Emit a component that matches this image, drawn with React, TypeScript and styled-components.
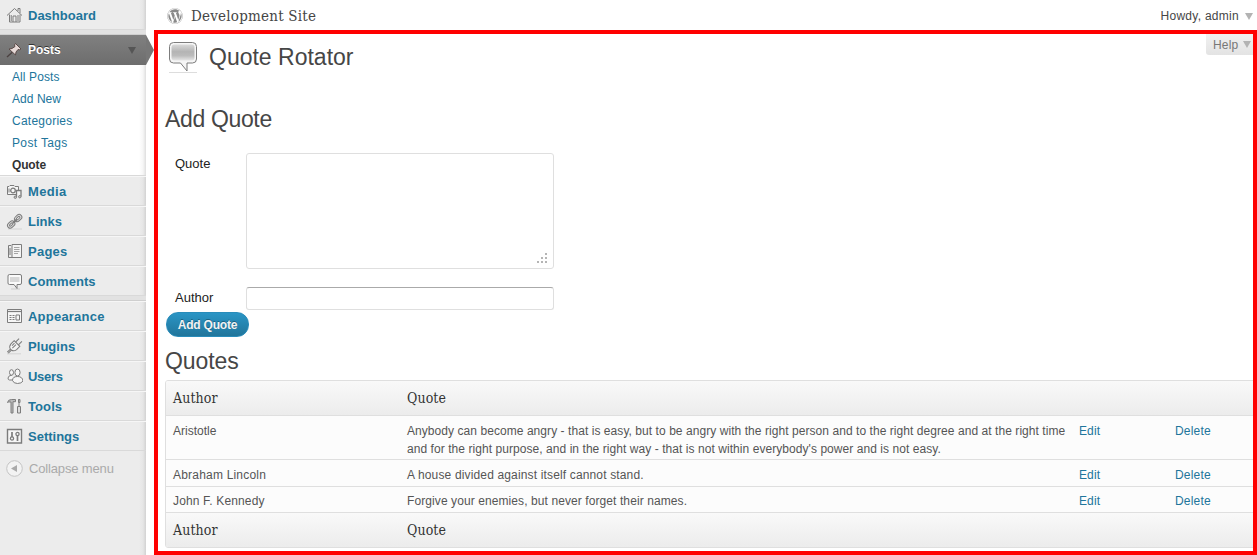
import React from "react";
import styled, { createGlobalStyle, css } from "styled-components";
import { FaWordpress } from "react-icons/fa";

const sans = `"Liberation Sans", Arial, sans-serif`;
const serif = `"DejaVu Serif Condensed", "DejaVu Serif", serif`;

const Global = createGlobalStyle`
  * { box-sizing: border-box; }
  body { margin: 0; background: #fff; font: 12px/18px ${sans}; color: #555; overflow: hidden; }
`;

const Page = styled.div`display: flex; width: 1257px; height: 555px; overflow: hidden;`;

const Sidebar = styled.nav`
  width: 146px;
  flex: none;
  background: linear-gradient(to right, #ececec 139px, #e6e6e6 143px, #d2d2d2 146px);
`;

const MenuItem = styled.a<{ $first?: boolean; $track?: number }>`
  display: flex;
  align-items: center;
  height: 30px;
  padding: 1px 0 0 6px;
  gap: 5px;
  border-top: 1px solid ${p => (p.$first ? "transparent" : "#f6f6f6")};
  border-bottom: 1px solid #d9d9d9;
  color: #21759b;
  font-weight: bold;
  font-size: 13px;
  letter-spacing: ${p => p.$track ?? 0}px;
  svg { flex: none; margin-top: -1px; }
`;

const Separator = styled.div`height: 5px; background: #e2e2e2; border-bottom: 1px solid #cfcfcf;`;

const Current = styled.a`
  position: relative;
  display: flex;
  align-items: center;
  gap: 5px;
  height: 30px;
  padding: 0 10px 0 6px;
  background: linear-gradient(#808080, #6d6d6d);
  color: #fff;
  font-weight: bold;
  font-size: 12px;
  text-shadow: 0 -1px 0 #333;
  span { flex: 1; }
`;

const Pointer = styled.svg`position: absolute; left: 146px; top: 0;`;

const Submenu = styled.div`
  height: 111px;
  background: linear-gradient(to right, #fff 139px, #f6f6f6 143px, #dedede 146px);
  border-bottom: 1px solid #d9d9d9;
  padding: 1px 0 0 12px;
`;

const SubItem = styled.a<{ $current?: boolean; $track: number }>`
  display: block;
  line-height: 22px;
  color: ${p => (p.$current ? "#333" : "#21759b")};
  font-weight: ${p => (p.$current ? "bold" : "normal")};
  letter-spacing: ${p => p.$track}px;
`;

const Collapse = styled.div`
  display: flex;
  align-items: center;
  gap: 6px;
  height: 35px;
  padding-left: 6px;
  color: #aaa;
  font-size: 13px;
  letter-spacing: -0.15px;
  span { padding-top: 1px; }
`;

const Main = styled.main`flex: 1; min-width: 0; padding-left: 8px; display: flex; flex-direction: column;`;

const TopBar = styled.header`
  display: flex;
  align-items: center;
  height: 30px;
  padding: 2px 4px 0 13px;
  color: #464646;
`;
const SiteName = styled.span`flex: 1; margin-left: 8px; font: 15px/20px ${serif}; letter-spacing: 0.22px;`;
const Account = styled.span`display: flex; align-items: center; gap: 6px; letter-spacing: 0.28px;`;

const Frame = styled.section`flex: 1; border: 4px solid #f00; padding-left: 7px; overflow: hidden;`;

const Head = styled.div`display: flex; align-items: flex-start; height: 66px; padding-left: 3px;`;
const HeadIcon = styled.div`padding-top: 7px;`;
const heading = css`margin: 0; font: 23px/29px ${sans}; color: #464646;`;
const Title = styled.h1`${heading} flex: 1; margin: 9px 0 0 10px;`;
const Subtitle = styled.h2<{ $track: number }>`${heading} letter-spacing: ${p => p.$track}px;`;
const HelpTab = styled.a`
  display: flex;
  align-items: center;
  gap: 5px;
  width: 47px;
  height: 21px;
  padding-left: 7px;
  background: linear-gradient(#f1f1f1, #e3e3e3);
  border-radius: 0 0 0 3px;
  color: #777;
  letter-spacing: 0.2px;
`;

const Field = styled.div`display: flex; margin-left: 10px; color: #222;`;
const Label = styled.label`width: 71px; padding-top: 2px; font-size: 13px;`;
const QuoteBox = styled.div`
  display: flex;
  align-items: flex-end;
  justify-content: flex-end;
  width: 308px;
  height: 116px;
  padding: 0 5px 5px 0;
  border: 1px solid #dfdfdf;
  border-radius: 3px;
`;
const AuthorInput = styled.input`
  width: 308px;
  height: 23px;
  border: 1px solid #dfdfdf;
  border-top-color: #aaa;
  border-radius: 3px;
`;
const Button = styled.button`
  display: block;
  width: 83px;
  height: 25px;
  margin: 2px 0 0 1px;
  padding: 0;
  border: 1px solid #298cba;
  border-radius: 12px;
  background: linear-gradient(#2a95c5, #21759b);
  color: #f2f2f2;
  font: bold 12px/18px ${sans};
  letter-spacing: -0.22px;
  text-shadow: 0 -1px 0 rgba(0, 0, 0, 0.3);
`;

const Table = styled.div`
  width: 1095px;
  height: 168px;
  border: 1px solid #dfdfdf;
  border-radius: 3px;
  background: #fcfcfc;
  overflow: hidden;
`;
const Row = styled.div<{ $h: number; $pad: number }>`
  display: grid;
  grid-template-columns: 234px 672px 96px 1fr;
  height: ${p => p.$h}px;
  padding: ${p => p.$pad}px 0 0 7px;
  border-bottom: 1px solid #dfdfdf;
`;
const HeadRow = styled(Row)`
  background: linear-gradient(#f9f9f9, #ececec);
  font: 14px/18px ${serif};
  letter-spacing: 0.1px;
  color: #333;
`;
const Cell = styled.span<{ $track?: number }>`white-space: pre; letter-spacing: ${p => p.$track ?? 0}px;`;
const Link = styled.a<{ $track?: number }>`color: #21759b; letter-spacing: ${p => p.$track ?? 0}px;`;

const Caret = ({ color }: { color: string }) => (
  <svg width="8" height="7" viewBox="0 0 8 7"><path d="M0 0h8L4 7z" fill={color} /></svg>
);

const Grip = () => (
  <svg width="11" height="10" viewBox="0 0 11 10" fill="#b5b5b5">
    <path d="M8 0h2v2H8zM4 4h2v2H4zM8 4h2v2H8zM0 8h2v2H0zM4 8h2v2H4zM8 8h2v2H8z" />
  </svg>
);

const shapes: Record<string, React.ReactNode> = {
  home: <><path d="M1 8.500 8.500 1.500 16 8.500M3.500 7.500V15h10.500V7.500M12 4V1.500h2V6" /><path d="M7 15V9h3v6M5.200 8v6M12 8v6" /></>,
  media: <><path d="M1.500 3.500h1.500l1-1h4l1 1h3.500v8h-11z" fill="#f6f6f6" /><circle cx="7" cy="7.500" r="2.300" strokeWidth="1.300" /><path d="M3 5.500v4" /><path d="M10.500 14V7.500h4.500v6" fill="#f6f6f6" strokeWidth="1.300" /><circle cx="9.300" cy="14.200" r="1.200" fill="#ccc" /><circle cx="13.800" cy="13.700" r="1.200" fill="#ccc" /></>,
  links: <><path d="M2 16h14" stroke="#d4d4d4" /><g transform="rotate(-43 8.500 8.500)"><rect x="0" y="5.800" width="8" height="5.400" rx="2.700" fill="#dedede" /><rect x="9.500" y="5.800" width="8" height="5.400" rx="2.700" fill="#dedede" /><rect x="2" y="7.600" width="4" height="1.800" rx=".9" fill="#f4f4f4" /><rect x="11.500" y="7.600" width="4" height="1.800" rx=".9" fill="#f4f4f4" /><path d="M6.500 8.500h5" strokeWidth="2" /></g></>,
  pages: <><path d="M5 2.500H2.500v12H6M4 5v7" /><path d="M6 1.500h9.500v13H6z" fill="#f4f4f4" /><path d="M8 4.500h5.500M8 6.500h5.500M8 8.500h5.500M8 10.500h4" stroke="#a5a5a5" /></>,
  comments: <><path d="M5 16h9" stroke="#ccc" /><path d="M3.500 1.500h10.500q1.500 0 1.500 1.500v7q0 1.500-1.500 1.500h-3v4L8 11.500H3.500Q2 11.500 2 10V3q0-1.500 1.500-1.500z" fill="#fafafa" /><path d="M4 4h9.500v5H4z" fill="#d8d8d8" stroke="none" /></>,
  appearance: <><path d="M1.500 1.500h14v13h-14z" fill="#f6f6f6" /><path d="M2 3.500h13" strokeWidth="1.200" /><path d="M3.500 7.500h2M6.500 7.500h2M3.500 9.500h2M6.500 9.500h2M3.500 11.500h2M6.500 11.500h2M10 7h3.500v5H10z" /></>,
  plugins: <><path d="M1 15.800h14" stroke="#d4d4d4" /><g transform="rotate(45 8.500 8)"><path d="M4.500 4.500h8V9q-.5 3.500-3 4h-2q-2.500-.5-3-4z" fill="#f4f4f4" /><path d="M6.500 4.500V-.5M10.500 4.500V-.5M7.800 13v4.500M9.200 13v4.500M8.500 6v5M6.500 6v3.500" /></g></>,
  users: <><ellipse cx="5.500" cy="4.500" rx="2" ry="2.800" fill="#f6f6f6" /><path d="M7 12H3.500q-1.500 0-1.500-2 .5-2.800 4-2.800" fill="#f6f6f6" /><ellipse cx="11.500" cy="4.500" rx="2.600" ry="3.500" fill="#f6f6f6" /><path d="M6.500 12.500q0-4 5-4t5.500 4.500q-1.500 2.500-5.500 2.500t-5-3z" fill="#f6f6f6" /></>,
  tools: <><path d="M1.500 4.500q.5-3 4-3h4v2.200H7V15H5V4Q2.500 3.500 1.500 4.500z" fill="#bbb" /><path d="M13 1v8M11.500 8.500h3v6.500h-3z" fill="#ddd" /><path d="M12.500 1.500h1.500v3h-1.500z" /></>,
  settings: <><path d="M1.500 1.500h14v13.500h-14z" fill="#f6f6f6" strokeWidth="1.400" /><path d="M6 4v5M11.500 8v5" strokeWidth="1.700" /><circle cx="6" cy="10.500" r="1.600" strokeWidth="1.300" /><circle cx="11.500" cy="6" r="1.600" strokeWidth="1.300" /></>,
};

const MenuIcon = ({ name }: { name: string }) => (
  <svg width="17" height="17" viewBox="0 0 17 17" fill="none" stroke="#7c7c7c" strokeWidth="1">{shapes[name]}</svg>
);

const Pin = () => (
  <svg width="17" height="17" viewBox="0 0 17 17">
    <path d="M1 15 6.500 10" stroke="#4b4140" strokeWidth="1.300" />
    <path d="M9.500 1.500 15 7l-1.500.8-1.500-.3-2 2.500-.5 3L3 7l3-.5L9 4.500l-.5-1.500z" fill="#e6d9d7" stroke="#54423f" strokeWidth=".9" />
  </svg>
);

const Bubble = () => (
  <svg width="31" height="34" viewBox="0 0 31 34">
    <defs>
      <linearGradient id="bubble" x2="0" y2="1">
        <stop offset="0" stopColor="#d9d9d9" /><stop offset=".45" stopColor="#b4b4b4" />
        <stop offset=".7" stopColor="#bcbcbc" /><stop offset="1" stopColor="#e6e6e6" />
      </linearGradient>
    </defs>
    <path d="M1 31.500h28" stroke="#ddd" />
    <path d="M5.500 1.500h19q4 0 4 4V18q0 4-4 4H19v8l-6.500-8h-7q-4 0-4-4V5.500q0-4 4-4z" fill="#f6f6f6" stroke="#7d7d7d" />
    <rect x="3.500" y="3.500" width="23" height="16" rx="3" fill="url(#bubble)" />
  </svg>
);

const submenu: [string, number][] = [["All Posts", 0.1], ["Add New", 0.05], ["Categories", 0.25], ["Post Tags", 0.35], ["Quote", -0.15]];
const groupA: [string, string, number][] = [["media", "Media", 0.35], ["links", "Links", 0], ["pages", "Pages", 0.25], ["comments", "Comments", 0.05]];
const groupB: [string, string, number][] = [
  ["appearance", "Appearance", 0.22], ["plugins", "Plugins", 0.05], ["users", "Users", -0.3], ["tools", "Tools", 0.1], ["settings", "Settings", 0],
];
const quotes = [
  { author: "Aristotle", authorTrack: 0, text: "Anybody can become angry - that is easy, but to be angry with the right person and to the right degree and at the right time\nand for the right purpose, and in the right way - that is not within everybody's power and is not easy.", track: 0.06, h: 44, pad: 6 },
  { author: "Abraham Lincoln", authorTrack: 0.2, text: "A house divided against itself cannot stand.", track: 0.15, h: 27, pad: 6 },
  { author: "John F. Kennedy", authorTrack: 0.15, text: "Forgive your enemies, but never forget their names.", track: 0.09, h: 26, pad: 5 },
];
const Spacer = styled.div<{ $h: number }>`height: ${p => p.$h}px;`;

export default function App() {
  return (
    <Page>
      <Global />
      <Sidebar>
        <MenuItem $first><MenuIcon name="home" />Dashboard</MenuItem>
        <Separator />
        <Current>
          <Pin /><span>Posts</span><Caret color="#555" />
          <Pointer width="8" height="30"><path d="M0 0 8 15 0 30z" fill="#777" /></Pointer>
        </Current>
        <Submenu>
          {submenu.map(([s, track]) => <SubItem key={s} $current={s === "Quote"} $track={track}>{s}</SubItem>)}
        </Submenu>
        {groupA.map(([i, t, track]) => <MenuItem key={i} $track={track}><MenuIcon name={i} />{t}</MenuItem>)}
        <Separator />
        {groupB.map(([i, t, track]) => <MenuItem key={i} $track={track}><MenuIcon name={i} />{t}</MenuItem>)}
        <Collapse>
          <svg width="17" height="17"><circle cx="8.500" cy="8.500" r="7.800" fill="#f3f3f3" stroke="#c4c4c4" /><path d="M11 5v7L5 8.500z" fill="#aaa" /></svg>
          <span>Collapse menu</span>
        </Collapse>
      </Sidebar>
      <Main>
        <TopBar>
          <FaWordpress size={16} color="#8a8a8a" />
          <SiteName>Development Site</SiteName>
          <Account>Howdy, admin <Caret color="#b3b3b3" /></Account>
        </TopBar>
        <Frame>
          <Head>
            <HeadIcon><Bubble /></HeadIcon>
            <Title>Quote Rotator</Title>
            <HelpTab>Help <Caret color="#b3b3b3" /></HelpTab>
          </Head>
          <Spacer $h={5} />
          <Subtitle $track={-0.35}>Add Quote</Subtitle>
          <Spacer $h={19} />
          <Field><Label>Quote</Label><QuoteBox><Grip /></QuoteBox></Field>
          <Spacer $h={18} />
          <Field><Label>Author</Label><AuthorInput /></Field>
          <Button>Add Quote</Button>
          <Spacer $h={10} />
          <Subtitle $track={-0.1}>Quotes</Subtitle>
          <Spacer $h={4} />
          <Table>
            <HeadRow $h={35} $pad={8}><span>Author</span><span>Quote</span></HeadRow>
            {quotes.map(q => (
              <Row key={q.author} $h={q.h} $pad={q.pad}>
                <Cell $track={q.authorTrack}>{q.author}</Cell>
                <Cell $track={q.track}>{q.text}</Cell>
                <Link $track={0.1}>Edit</Link>
                <Link $track={0.2}>Delete</Link>
              </Row>
            ))}
            <HeadRow $h={35} $pad={8}><span>Author</span><span>Quote</span></HeadRow>
          </Table>
        </Frame>
      </Main>
    </Page>
  );
}
